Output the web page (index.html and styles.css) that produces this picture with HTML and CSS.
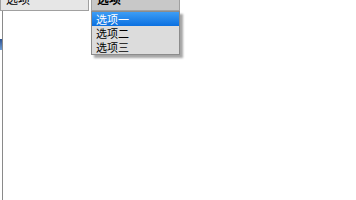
FILE: index.html
```html
<!DOCTYPE html>
<html lang="zh-CN">
<head>
    <meta charset="UTF-8">
    <title>下拉菜单</title>
    <link rel="stylesheet" href="styles.css">
</head>
<body>
    <div class="toolbar">
        <button class="tab-btn">选项</button>
        <button class="tab-btn tab-active">选项</button>
    </div>

    <div class="workspace">
        <div class="side-mark"></div>

        <ul class="dropdown">
            <li class="dropdown-item selected">选项一</li>
            <li class="dropdown-item">选项二</li>
            <li class="dropdown-item">选项三</li>
        </ul>
    </div>
</body>
</html>
```

FILE: styles.css
```css
body {
    margin: 0;
    font-family: "Noto Sans CJK SC", "Liberation Sans", sans-serif;
    font-size: 11px;
    background-color: #fff;
    width: 356px;
    height: 200px;
    overflow: hidden;
}

.toolbar {
    display: flex;
    gap: 2px;
    height: 11px;
    overflow: hidden;
}

.tab-btn {
    width: 89px;
    height: 23px;
    margin-top: -12px;
    padding: 0 0 0 5px;
    border: 1px solid #a0a0a0;
    border-top: none;
    background-color: #e6e6e6;
    font-family: inherit;
    font-size: 12px;
    line-height: 20px;
    text-align: left;
    color: #000;
}

.tab-active {
    background-color: #c8c8c8;
    font-weight: bold;
}

.workspace {
    position: relative;
    height: 189px;
    border-left: 1px solid #8a8a8a;
    margin-left: 2px;
}

.side-mark {
    position: absolute;
    left: -3px;
    top: 28px;
    width: 2px;
    height: 11px;
    background: linear-gradient(#2b4f8f, #6fa0d8);
}

.dropdown {
    position: absolute;
    left: 88px;
    top: 0;
    width: 87px;
    margin: 0;
    padding: 0;
    list-style: none;
    background-color: #dcdcdc;
    border: 1px solid #8c8c8c;
    box-shadow: 3px 3px 2px rgba(0, 0, 0, 0.35);
}

.dropdown-item {
    height: 14px;
    line-height: 14px;
    padding-left: 4px;
    color: #000;
}

.dropdown-item.selected {
    background: linear-gradient(#3d9df5, #0b70e0);
    color: #fff;
}
```
